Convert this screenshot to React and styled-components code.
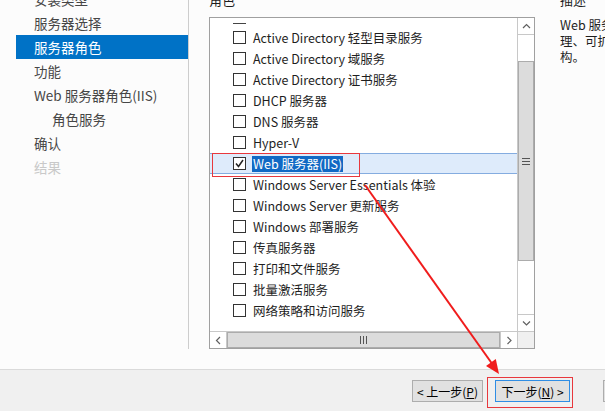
import React from "react";
import styled, { createGlobalStyle } from "styled-components";

const GlobalStyle = createGlobalStyle`
  html, body {
    margin: 0;
    padding: 0;
    background: #fcfcfc;
  }
  body {
    font-family: "Noto Sans CJK SC", "Noto Sans", sans-serif;
  }
`;

const Window = styled.div`
  position: relative;
  width: 605px;
  height: 411px;
  overflow: hidden;
  display: flex;
  flex-direction: column;
  background: #fcfcfc;
`;

const Main = styled.div`
  display: flex;
  height: 369px;
  flex-shrink: 0;
  border-bottom: 1px solid #dadada;
  overflow: hidden;
`;

const Sidebar = styled.nav`
  width: 172px;
  height: 349px;
  padding-left: 16px;
  flex-shrink: 0;
  border-right: 1px solid #cdcdcd;
  overflow: hidden;
`;

const NavList = styled.div`
  margin-top: -13px;
`;

const NavItem = styled.div`
  height: 24px;
  line-height: 24px;
  padding-left: ${(p) => (p.$indent ? 36 : 18)}px;
  font-size: 13.5px;
  white-space: nowrap;
  color: ${(p) => (p.$active ? "#ffffff" : p.$disabled ? "#c9c9c9" : "#464646")};
  background: ${(p) => (p.$active ? "#0072c6" : "transparent")};
`;

const Content = styled.section`
  padding-left: 20px;
  flex-shrink: 0;
`;

const Heading = styled.div`
  font-size: 13px;
  line-height: 18px;
  margin: -9px 0 8px;
  color: #1e1e1e;
  white-space: nowrap;
`;

const ListBox = styled.div`
  width: 324px;
  height: 330px;
  border: 1px solid #a0a0a0;
  background: #ffffff;
  display: grid;
  grid-template-columns: 307px 17px;
  grid-template-rows: 313px 17px;
`;

const Viewport = styled.div`
  overflow: hidden;
`;

const PeekRow = styled.div`
  height: 9px;
  padding-left: 23px;
  box-sizing: border-box;
`;

const PeekBox = styled.div`
  width: 13px;
  height: 5px;
  border-bottom: 1px solid #444;
`;

const Row = styled.div`
  height: 21px;
  box-sizing: border-box;
  display: flex;
  align-items: center;
  gap: 7px;
  padding-left: 23px;
  font-size: 12.5px;
  color: #1e1e1e;
  white-space: nowrap;
  background: ${(p) => (p.$selected ? "#deebfb" : "transparent")};
  border: 1px solid ${(p) => (p.$selected ? "#84ace0" : "transparent")};
  border-width: 1px 0;
`;

const CheckBox = styled.span`
  width: 11px;
  height: 11px;
  border: 1px solid #333;
  background: #fff;
  flex-shrink: 0;
  display: flex;
  align-items: center;
  justify-content: center;
`;

const Highlight = styled.span`
  background: #1169c4;
  color: #fff;
  padding: 0 1px;
  margin-left: -1px;
  line-height: 16px;
`;

const VScroll = styled.div`
  display: flex;
  flex-direction: column;
  border-left: 1px solid #c8c8c8;
  box-sizing: border-box;
`;

const ArrowBtn = styled.div`
  flex-shrink: 0;
  width: ${(p) => (p.$horizontal ? "16px" : "auto")};
  height: ${(p) => (p.$horizontal ? "auto" : "16px")};
  display: flex;
  align-items: center;
  justify-content: center;
  background: #fff;
  border-${(p) => p.$side}: 1px solid #c8c8c8;
`;

const Track = styled.div`
  flex: 1;
  display: flex;
  flex-direction: ${(p) => (p.$horizontal ? "row" : "column")};
  background: #fff;
`;

const Thumb = styled.div`
  box-sizing: border-box;
  background: #dcdcdc;
  border: 1px solid #acacac;
  display: flex;
  align-items: center;
  justify-content: center;
  ${(p) =>
    p.$horizontal
      ? "flex: 1;"
      : "margin-top: 26px; height: 200px;"}
`;

const HScroll = styled.div`
  display: flex;
  border-top: 1px solid #c8c8c8;
  box-sizing: border-box;
`;

const Corner = styled.div`
  background: #f0f0f0;
  border-top: 1px solid #c8c8c8;
  border-left: 1px solid #c8c8c8;
`;

const Desc = styled.aside`
  margin-left: 25px;
  width: 200px;
  flex-shrink: 0;
`;

const DescText = styled.div`
  font-size: 12.5px;
  line-height: 16px;
  color: #1e1e1e;
  white-space: nowrap;
`;

const Footer = styled.footer`
  flex: 1;
  background: #f0f0f0;
  display: flex;
  align-items: flex-start;
  padding: 10px 0 0 412px;
`;

const Button = styled.button`
  height: 22px;
  width: ${(p) => p.$w}px;
  margin-left: ${(p) => p.$ml || 0}px;
  flex-shrink: 0;
  box-sizing: border-box;
  padding: 0;
  border: 1px solid ${(p) => (p.$primary ? "#2f8de4" : "#adadad")};
  background: #e1e1e1;
  color: #000;
  font-family: "Noto Sans CJK SC", "Noto Sans", sans-serif;
  font-size: 12px;
  white-space: nowrap;
`;

const Overlay = styled.svg`
  position: absolute;
  left: 0;
  top: 0;
  pointer-events: none;
`;

const Chevron = ({ dir }) => {
  const d = {
    up: "M1 5 L4.5 1.5 L8 5",
    down: "M1 1.5 L4.5 5 L8 1.5",
    left: "M5 1 L1.5 4.5 L5 8",
    right: "M1.5 1 L5 4.5 L1.5 8",
  }[dir];
  const vertical = dir === "up" || dir === "down";
  return (
    <svg width={vertical ? 9 : 7} height={vertical ? 7 : 9}>
      <path d={d} fill="none" stroke="#606060" strokeWidth="1.2" />
    </svg>
  );
};

const Grip = ({ horizontal }) =>
  horizontal ? (
    <svg width="7" height="8">
      <path d="M0.5 0 V8 M3.5 0 V8 M6.5 0 V8" stroke="#555" strokeWidth="1" />
    </svg>
  ) : (
    <svg width="8" height="7">
      <path d="M0 0.5 H8 M0 3.5 H8 M0 6.5 H8" stroke="#555" strokeWidth="1" />
    </svg>
  );

const Check = () => (
  <svg width="9" height="9" viewBox="0 0 9 9">
    <path d="M1 4.5 L3.5 7.5 L8 1" fill="none" stroke="#222" strokeWidth="1.5" />
  </svg>
);

const navItems = [
  { label: "安装类型" },
  { label: "服务器选择" },
  { label: "服务器角色", active: true },
  { label: "功能" },
  { label: "Web 服务器角色(IIS)" },
  { label: "角色服务", indent: true },
  { label: "确认" },
  { label: "结果", disabled: true },
];

const roles = [
  "Active Directory 轻型目录服务",
  "Active Directory 域服务",
  "Active Directory 证书服务",
  "DHCP 服务器",
  "DNS 服务器",
  "Hyper-V",
  "Web 服务器(IIS)",
  "Windows Server Essentials 体验",
  "Windows Server 更新服务",
  "Windows 部署服务",
  "传真服务器",
  "打印和文件服务",
  "批量激活服务",
  "网络策略和访问服务",
];

export default function App() {
  return (
    <>
      <GlobalStyle />
      <Window>
        <Main>
          <Sidebar>
            <NavList>
              {navItems.map((item) => (
                <NavItem
                  key={item.label}
                  $active={item.active}
                  $indent={item.indent}
                  $disabled={item.disabled}
                >
                  {item.label}
                </NavItem>
              ))}
            </NavList>
          </Sidebar>
          <Content>
            <Heading>角色</Heading>
            <ListBox>
              <Viewport>
                <PeekRow>
                  <PeekBox />
                </PeekRow>
                {roles.map((role) => {
                  const selected = role === "Web 服务器(IIS)";
                  return (
                    <Row key={role} $selected={selected}>
                      <CheckBox>{selected && <Check />}</CheckBox>
                      {selected ? <Highlight>{role}</Highlight> : <span>{role}</span>}
                    </Row>
                  );
                })}
              </Viewport>
              <VScroll>
                <ArrowBtn $side="bottom">
                  <Chevron dir="up" />
                </ArrowBtn>
                <Track>
                  <Thumb>
                    <Grip />
                  </Thumb>
                </Track>
                <ArrowBtn $side="top">
                  <Chevron dir="down" />
                </ArrowBtn>
              </VScroll>
              <HScroll>
                <ArrowBtn $horizontal $side="right">
                  <Chevron dir="left" />
                </ArrowBtn>
                <Track $horizontal>
                  <Thumb $horizontal>
                    <Grip horizontal />
                  </Thumb>
                </Track>
                <ArrowBtn $horizontal $side="left">
                  <Chevron dir="right" />
                </ArrowBtn>
              </HScroll>
              <Corner />
            </ListBox>
          </Content>
          <Desc>
            <Heading>描述</Heading>
            <DescText>
              <div>Web 服务器(IIS)提供可靠、可管</div>
              <div>理、可扩展的 Web 应用程序基础结</div>
              <div>构。</div>
            </DescText>
          </Desc>
        </Main>
        <Footer>
          <Button $w={71}>
            &lt; 上一步(<u>P</u>)
          </Button>
          <Button $w={75} $ml={12} $primary>
            下一步(<u>N</u>) &gt;
          </Button>
          <Button $w={75} $ml={33}>
            安装(<u>I</u>)
          </Button>
        </Footer>
        <Overlay width="605" height="411">
          <rect x="212.5" y="153.5" width="147" height="23" fill="none" stroke="#e8383d" strokeWidth="1" />
          <rect x="487.5" y="377.5" width="85" height="30" fill="none" stroke="#e8383d" strokeWidth="1" />
          <line x1="365" y1="185" x2="493" y2="365" stroke="#f01c1c" strokeWidth="2" />
          <polygon points="499,374 495.8,359.1 486.0,366.1" fill="#f01c1c" />
        </Overlay>
      </Window>
    </>
  );
}
